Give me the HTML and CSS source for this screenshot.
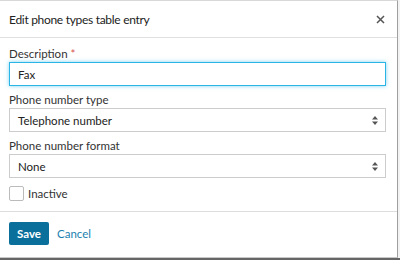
FILE: index.html
```html
<!DOCTYPE html>
<html lang="en">
<head>
  <meta charset="UTF-8">
  <title>Edit phone types table entry</title>
  <link rel="stylesheet" href="styles.css">
</head>
<body>
  <div class="backdrop">
    <div class="dialog">
      <header class="dialog-head">
        <h1>Edit phone types table entry</h1>
        <button class="close" aria-label="Close">
          <svg width="9" height="9" viewBox="0 0 9 9"><path d="M1 1L8 8M8 1L1 8" stroke="#555" stroke-width="1.5"/></svg>
        </button>
      </header>
      <div class="dialog-body">
        <label class="field-label">Description <span class="req">*</span></label>
        <input class="text-input focused" type="text" value="Fax">

        <label class="field-label">Phone number type</label>
        <div class="select">
          <span>Telephone number</span>
          <svg class="arrows" width="6" height="9" viewBox="0 0 6 9"><path d="M3 0L6 3.5H0Z M3 9L0 5.5H6Z" fill="#555"/></svg>
        </div>

        <label class="field-label">Phone number format</label>
        <div class="select">
          <span>None</span>
          <svg class="arrows" width="6" height="9" viewBox="0 0 6 9"><path d="M3 0L6 3.5H0Z M3 9L0 5.5H6Z" fill="#555"/></svg>
        </div>

        <div class="check-row">
          <span class="checkbox"></span>
          <span>Inactive</span>
        </div>
      </div>
      <footer class="dialog-foot">
        <button class="btn-save">Save</button>
        <a class="btn-cancel" href="#">Cancel</a>
      </footer>
    </div>
  </div>
</body>
</html>
```

FILE: styles.css
```css
* {
  box-sizing: border-box;
  margin: 0;
  padding: 0;
  font-family: 'Lato', 'Open Sans', sans-serif;
}

body {
  width: 400px;
  height: 260px;
  overflow: hidden;
  background: #f3f3f3;
}

.backdrop {
  height: 260px;
  border-bottom: 2px solid #666;
}

.dialog {
  width: 398px;
  height: 258px;
  background: #fff;
  border-top: 1px solid #d8d8d8;
  border-right: 1px solid #a0a0a0;
  border-bottom: 1px solid #c8c8c8;
  display: flex;
  flex-direction: column;
}

.dialog-head {
  height: 37px;
  display: flex;
  align-items: center;
  justify-content: space-between;
  padding: 0 12px 0 9px;
  border-bottom: 1px solid #e0e0e0;
}

.dialog-head h1 {
  font-size: 12px;
  letter-spacing: -0.3px;
  font-weight: 400;
  color: #222;
}

.close {
  background: none;
  border: none;
  display: flex;
  cursor: pointer;
}

.dialog-body {
  padding: 8px 11px 0 9px;
  display: flex;
  flex-direction: column;
  height: 174px;
  border-bottom: 1px solid #ddd;
}

.field-label {
  font-size: 11.5px;
  color: #333;
  line-height: 15px;
  margin-bottom: 1px;
}

.req {
  color: #d9534f;
}

.text-input,
.select {
  height: 24px;
  width: 377px;
  border: 1px solid #ccc;
  padding: 0 8px;
  font-size: 11.5px;
  color: #222;
  margin-bottom: 6px;
}

.text-input.focused {
  border-color: #2bb5e6;
  box-shadow: 0 0 4px rgba(43, 181, 230, 0.6);
  outline: none;
}

.select {
  display: flex;
  align-items: center;
  justify-content: space-between;
  padding-right: 7px;
}

.check-row {
  display: flex;
  align-items: center;
  gap: 4px;
  font-size: 11.5px;
  color: #333;
  margin-top: 2px;
}

.checkbox {
  width: 15px;
  height: 15px;
  border: 1px solid #bbb;
  border-radius: 2px;
}

.dialog-foot {
  display: flex;
  align-items: center;
  gap: 8px;
  padding: 10px 9px;
}

.btn-save {
  width: 40px;
  height: 23px;
  background: #0b6f9c;
  color: #fff;
  border: none;
  border-radius: 2px;
  font-size: 11.5px;
  font-weight: 700;
}

.btn-cancel {
  font-size: 11.5px;
  color: #1a7fb0;
  text-decoration: none;
}
```
